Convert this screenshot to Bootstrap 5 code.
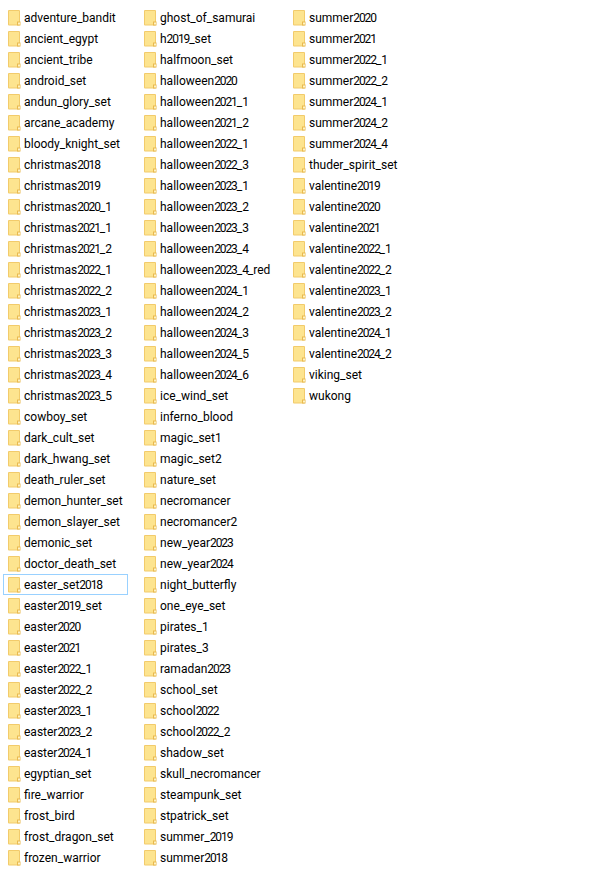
<!DOCTYPE html>
<html lang="en">
<head>
  <meta charset="UTF-8" />
  <title>Folders</title>
  <link href="https://cdn.jsdelivr.net/npm/bootstrap@5.3.2/dist/css/bootstrap.min.css" rel="stylesheet">
  <style>
    body {
      background: #fff;
      font-family: Roboto, "Liberation Sans", sans-serif;
      font-size: 12px;
      color: #000;
      height: 887px;
      overflow: hidden;
    }
    #files {
      padding: 7px 0 0 3px;
    }
    .file-col { width: 136px; }
    .file-col.wide { width: 149px; }
    .file-row {
      width: 125px;
      height: 21px;
      line-height: 20px;
      gap: 3px;
      padding-left: 4px;
      border: 1px solid transparent;
      white-space: nowrap;
    }
    .file-row.picked { border-color: #99d1ff; }
    .file-row svg { flex: none; }
    /* roboto digits run wider than the screenshot's */
    .digits { letter-spacing: -1.1px; }
  </style>
</head>
<body>
  <div id="files" class="d-flex align-items-start"></div>

  <script>
    const columns = [
      ["adventure_bandit","ancient_egypt","ancient_tribe","android_set","andun_glory_set","arcane_academy","bloody_knight_set","christmas2018","christmas2019","christmas2020_1","christmas2021_1","christmas2021_2","christmas2022_1","christmas2022_2","christmas2023_1","christmas2023_2","christmas2023_3","christmas2023_4","christmas2023_5","cowboy_set","dark_cult_set","dark_hwang_set","death_ruler_set","demon_hunter_set","demon_slayer_set","demonic_set","doctor_death_set","easter_set2018","easter2019_set","easter2020","easter2021","easter2022_1","easter2022_2","easter2023_1","easter2023_2","easter2024_1","egyptian_set","fire_warrior","frost_bird","frost_dragon_set","frozen_warrior"],
      ["ghost_of_samurai","h2019_set","halfmoon_set","halloween2020","halloween2021_1","halloween2021_2","halloween2022_1","halloween2022_3","halloween2023_1","halloween2023_2","halloween2023_3","halloween2023_4","halloween2023_4_red","halloween2024_1","halloween2024_2","halloween2024_3","halloween2024_5","halloween2024_6","ice_wind_set","inferno_blood","magic_set1","magic_set2","nature_set","necromancer","necromancer2","new_year2023","new_year2024","night_butterfly","one_eye_set","pirates_1","pirates_3","ramadan2023","school_set","school2022","school2022_2","shadow_set","skull_necromancer","steampunk_set","stpatrick_set","summer_2019","summer2018"],
      ["summer2020","summer2021","summer2022_1","summer2022_2","summer2024_1","summer2024_2","summer2024_4","thuder_spirit_set","valentine2019","valentine2020","valentine2021","valentine2022_1","valentine2022_2","valentine2023_1","valentine2023_2","valentine2024_1","valentine2024_2","viking_set","wukong"]
    ];

    const folderIcon = `<svg width="13" height="16" viewBox="0 0 13 16">
      <rect x="0" y="0" width="12" height="15.5" rx="1" fill="#f2cb6b"/>
      <rect x="1" y="1" width="10" height="13.5" fill="#fde48f"/>
      <path d="M9 15.5V11.5H12.5V15.5Z" fill="#e8b94f"/>
      <rect x="10" y="12.5" width="2" height="2" fill="#fff3c4"/>
    </svg>`;

    function label(name) {
      return name.replace(/\d+/g, m => `<span class="digits">${m}</span>`);
    }

    document.getElementById("files").innerHTML = columns.map((names, i) => `
      <div class="file-col ${i === 1 ? "wide" : ""}">
        ${names.map(name => `
          <div class="file-row d-flex align-items-center ${name === "easter_set2018" ? "picked" : ""}">
            ${folderIcon}<span>${label(name)}</span>
          </div>`).join("")}
      </div>`).join("");
  </script>
</body>
</html>
